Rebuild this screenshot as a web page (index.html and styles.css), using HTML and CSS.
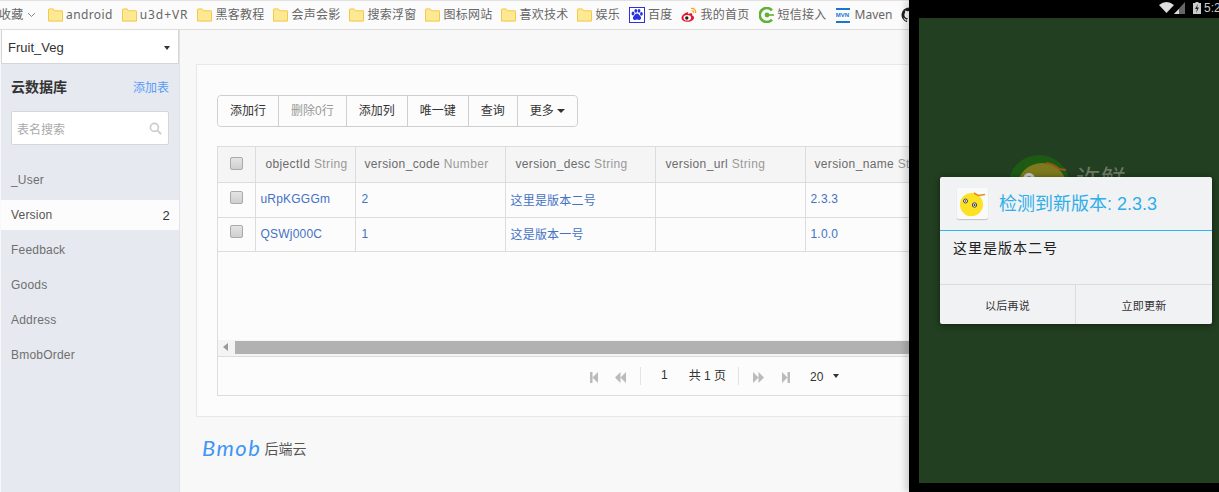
FILE: index.html
```html
<!DOCTYPE html>
<html lang="zh-CN">
<head>
  <meta charset="UTF-8">
  <title>Bmob 云数据库</title>
  <link rel="stylesheet" href="styles.css">
</head>
<body>
  <svg class="defs" width="0" height="0">
    <symbol id="folder" viewBox="0 0 16 14">
      <path d="M.5 13.500V1.500q0-1 1-1h4l1.500 2h8q.5 0 .5 .5v10.500z" fill="#fde992" stroke="#f3c440"/>
    </symbol>
  </svg>

  <nav class="bookmarks">
    <span class="bm bm-first">收藏 <svg class="chev" width="9" height="6" viewBox="0 0 9 6"><path d="M1 1l3.500 3.500L8 1" fill="none" stroke="#888"/></svg></span>
    <span class="bm bm-en"><svg class="bm-icon"><use href="#folder"/></svg>android</span>
    <span class="bm bm-wide"><svg class="bm-icon"><use href="#folder"/></svg>u3d+VR</span>
    <span class="bm"><svg class="bm-icon"><use href="#folder"/></svg>黑客教程</span>
    <span class="bm"><svg class="bm-icon"><use href="#folder"/></svg>会声会影</span>
    <span class="bm"><svg class="bm-icon"><use href="#folder"/></svg>搜索浮窗</span>
    <span class="bm"><svg class="bm-icon"><use href="#folder"/></svg>图标网站</span>
    <span class="bm"><svg class="bm-icon"><use href="#folder"/></svg>喜欢技术</span>
    <span class="bm"><svg class="bm-icon"><use href="#folder"/></svg>娱乐</span>
    <span class="bm"><svg class="site-icon" viewBox="0 0 16 16"><rect x=".5" y=".5" width="15" height="15" fill="#fff" stroke="#2932e1"/><g fill="#2932e1"><ellipse cx="4" cy="6.500" rx="1.400" ry="1.900"/><ellipse cx="6.800" cy="3.800" rx="1.400" ry="1.900"/><ellipse cx="10" cy="3.800" rx="1.400" ry="1.900"/><ellipse cx="12.400" cy="6.800" rx="1.400" ry="1.900"/><path d="M8 6.500c2 0 2.300 2 3.500 3 1.200 1.200 .5 3.500-1.500 3.500-1 0-1.300-.4-2-.4s-1 .4-2 .4c-2 0-2.700-2.300-1.500-3.500 1.200-1 1.500-3 3.500-3z"/></g></svg>百度</span>
    <span class="bm"><svg class="site-icon" viewBox="0 0 16 16"><path d="M6.800 5.300C3.500 6 .5 8.600.5 11c0 2.300 3 3.700 6 3.700 3.800 0 6.500-2 6.500-4 0-1.200-1-1.800-1.900-2.100.5-1.300.1-2.200-.8-2.400-1-.2-2.200.3-3.100 1 .2-1-.1-2.200-.4-1.900z" fill="#e6162d"/><ellipse cx="6.300" cy="10.800" rx="3.800" ry="2.800" fill="#fff"/><circle cx="5.800" cy="11" r="1.700" fill="#222"/><path d="M10 1.500c3-.6 5.200 1.800 4.600 4.700M10.500 3.800c1.400-.3 2.500.8 2.200 2.200" fill="none" stroke="#f5a623" stroke-width="1.200"/></svg>我的首页</span>
    <span class="bm"><svg class="site-icon" viewBox="0 0 16 16"><path d="M13 12.600A7 7 0 1 1 13 3.400" fill="none" stroke="#5fb236" stroke-width="2.600"/><circle cx="8" cy="8" r="2.400" fill="#5fb236"/><path d="M8 8h7" stroke="#5fb236" stroke-width="1.600"/></svg>短信接入</span>
    <span class="bm bm-maven"><span class="mvn">MVN</span>Maven</span>
    <span class="bm"><svg class="site-icon" viewBox="0 0 16 16"><path d="M8 .5a7.500 7.500 0 0 0-2.400 14.600c.4.100.5-.2.500-.4v-1.300c-2.100.4-2.600-1-2.600-1-.3-.9-.8-1.100-.8-1.100-.7-.5.100-.5.100-.5.800.100 1.200.8 1.200.8.700 1.200 1.800.8 2.300.6.100-.5.300-.8.500-1-1.700-.2-3.400-.8-3.400-3.700 0-.8.300-1.500.8-2-.1-.2-.3-1 .1-2 0 0 .6-.2 2.100.8a7 7 0 0 1 3.800 0c1.400-1 2.100-.8 2.100-.8.400 1 .2 1.800.1 2 .5.500.8 1.200.8 2 0 2.900-1.800 3.500-3.400 3.700.3.200.5.700.5 1.400v2c0 .2.100.5.500.4A7.500 7.500 0 0 0 8 .5z" fill="#1b1f23"/></svg></span>
  </nav>

  <div class="app">
    <aside class="sidebar">
      <div class="app-select">Fruit_Veg<span class="caret"></span></div>
      <div class="side-head">
        <strong>云数据库</strong>
        <a class="add-table">添加表</a>
      </div>
      <div class="search">
        <span>表名搜索</span>
        <svg width="13" height="13" viewBox="0 0 14 14"><circle cx="5.800" cy="5.800" r="4.300" fill="none" stroke="#ccc" stroke-width="1.800"/><path d="M9 9l4 4" stroke="#ccc" stroke-width="2"/></svg>
      </div>
      <ul class="tables">
        <li>_User</li>
        <li class="active">Version<span class="count">2</span></li>
        <li>Feedback</li>
        <li>Goods</li>
        <li>Address</li>
        <li>BmobOrder</li>
      </ul>
    </aside>

    <main class="content">
      <section class="panel">
        <div class="toolbar">
          <button>添加行</button>
          <button class="disabled">删除0行</button>
          <button>添加列</button>
          <button>唯一键</button>
          <button>查询</button>
          <button>更多<span class="caret"></span></button>
        </div>

        <div class="grid-box">
          <table class="grid">
            <colgroup>
              <col class="c-check"><col class="c-id"><col class="c-wide"><col class="c-wide"><col class="c-wide"><col class="c-wide">
            </colgroup>
            <thead>
              <tr>
                <th><span class="check"></span></th>
                <th class="th-id">objectId <em>String</em></th>
                <th>version_code <em>Number</em></th>
                <th>version_desc <em>String</em></th>
                <th>version_url <em>String</em></th>
                <th>version_name <em>String</em></th>
              </tr>
            </thead>
            <tbody>
              <tr>
                <td><span class="check"></span></td>
                <td>uRpKGGGm</td><td>2</td><td>这里是版本二号</td><td></td><td>2.3.3</td>
              </tr>
              <tr>
                <td><span class="check"></span></td>
                <td>QSWj000C</td><td>1</td><td>这是版本一号</td><td></td><td>1.0.0</td>
              </tr>
            </tbody>
          </table>
          <div class="grid-space"></div>
          <div class="hscroll">
            <svg width="5" height="8" viewBox="0 0 5 8"><path d="M5 0v8L0 4z" fill="#999"/></svg>
            <div class="thumb"></div>
          </div>
          <div class="pager">
            <svg class="pg pg-first" width="8" height="11" viewBox="0 0 8 11"><path d="M0 0h2.500v11H0zM8 0v11L2.500 5.500z" fill="#bbb"/></svg>
            <svg class="pg pg-prev" width="11" height="11" viewBox="0 0 11 11"><path d="M5.500 0v11L0 5.500zM11 0v11L5.500 5.500z" fill="#bbb"/></svg>
            <span class="pg-sep"></span>
            <span class="pg-num">1</span>
            <span class="pg-total">共 1 页</span>
            <span class="pg-sep pg-sep2"></span>
            <svg class="pg pg-next" width="11" height="11" viewBox="0 0 11 11"><path d="M0 0v11l5.500-5.500zM5.500 0v11L11 5.500z" fill="#bbb"/></svg>
            <svg class="pg pg-last" width="8" height="11" viewBox="0 0 8 11"><path d="M5.500 0H8v11H5.500zM0 0v11l5.500-5.500z" fill="#bbb"/></svg>
            <span class="pg-size">20<span class="caret"></span></span>
          </div>
        </div>
      </section>
      <footer class="brand"><span class="brand-logo">Bmob</span> 后端云</footer>
    </main>
  </div>

  <div class="phone">
    <div class="statusbar">
      <svg width="15" height="11" viewBox="0 0 15 11"><path d="M7.500 11L0 3q7.500-6 15 0z" fill="#ddd"/></svg>
      <svg width="11" height="12" viewBox="0 0 11 12"><path d="M11 0v12H0z" fill="#666"/><path d="M5 7v5H0z" fill="#ddd"/></svg>
      <svg class="battery" width="8" height="12" viewBox="0 0 8 12"><path d="M2.500 0h3v1H8v11H0V1h2.500z" fill="#ccc"/><path d="M5 2L2 7h2l-1 4 3-5.500H4z" fill="#222"/></svg>
      <span class="clock">5:2</span>
    </div>
    <div class="screen">
      <div class="splash">
        <svg width="62" height="40" viewBox="0 0 62 40"><circle cx="31" cy="31" r="31" fill="#1d5a14"/><ellipse cx="34" cy="30" rx="24" ry="22" fill="#7c7a1c"/><path d="M38 8q8 1 13 6l7 1" fill="none" stroke="#96561a" stroke-width="2"/><circle cx="21" cy="24" r="6" fill="#ccc"/><circle cx="21" cy="25" r="3.500" fill="#333"/></svg>
        <span>许鲜</span>
      </div>
      <div class="dialog">
        <div class="dialog-head">
          <span class="dialog-icon">
            <svg width="28" height="26" viewBox="0 0 28 26"><path d="M12.500 2a11.500 11.500 0 0 1 0 23c-1.500 0-3 .5-4.500-.5C3.500 22.500 1 18 1 13.500A11.500 11.500 0 0 1 12.500 2z" fill="#fde124"/><path d="M15 2l4 2.500 7-1" fill="none" stroke="#e58e1a" stroke-width="1.500"/><circle cx="6.500" cy="10" r="2" fill="#fff" stroke="#444"/><circle cx="6.500" cy="10" r=".8" fill="#333"/><circle cx="15.500" cy="14" r="2.200" fill="#fff" stroke="#444"/><circle cx="15.500" cy="14" r="1" fill="#333"/></svg>
          </span>
          <span class="dialog-title">检测到新版本: 2.3.3</span>
        </div>
        <div class="dialog-body">这里是版本二号</div>
        <div class="dialog-actions">
          <span>以后再说</span>
          <span>立即更新</span>
        </div>
      </div>
    </div>
  </div>
</body>
</html>
```

FILE: styles.css
```css
* {
  box-sizing: border-box;
}
html, body {
  margin: 0;
  width: 1219px;
  height: 492px;
  overflow: hidden;
}
body {
  position: relative;
  font-family: "Liberation Sans", "Noto Sans CJK SC", sans-serif;
  font-size: 12px;
  color: #666;
  background: #f8f8f8;
}
.defs {
  position: absolute;
}

/* browser bookmarks */
.bookmarks {
  height: 30px;
  display: flex;
  align-items: center;
  white-space: nowrap;
  background: #fbfbfb;
  border-top: 1px solid #e2e2e2;
  border-bottom: 1px solid #dcdcdc;
  font-family: "Noto Sans", "Noto Sans CJK SC", sans-serif;
  font-size: 12px;
  letter-spacing: .25px;
  color: #666;
}
.bm {
  display: flex;
  align-items: center;
  line-height: 18px;
  margin-right: 9px;
}
.bm-first {
  width: 48px;
  margin-left: -1px;
  margin-right: 1px;
  gap: 3px;
}
.bm-en {
  letter-spacing: .4px;
}
.bm-wide {
  letter-spacing: .9px;
}
.bm-maven {
  letter-spacing: 0;
}
.bm-icon {
  width: 15px;
  height: 14px;
  margin-right: 3px;
}
.site-icon {
  width: 16px;
  height: 16px;
  margin-right: 3px;
  flex: none;
}
.mvn {
  width: 14px;
  height: 15px;
  margin-right: 5px;
  border-top: 2px solid #1976d2;
  border-bottom: 2px solid #1976d2;
  font: bold 6px/11px "Liberation Sans", sans-serif;
  color: #1976d2;
  text-align: center;
  overflow: hidden;
}

.app {
  display: flex;
  height: 462px;
}

/* left column */
.sidebar {
  width: 179px;
  flex: none;
  margin-left: 1px;
  background: #e6e9f0;
  border-right: 1px solid #e1e3e8;
}
.app-select {
  height: 34px;
  padding: 2px 8px 0 6px;
  display: flex;
  align-items: center;
  justify-content: space-between;
  background: #fff;
  border: 1px solid #d6d6d6;
  border-top: 0;
  font-size: 13px;
  color: #333;
}
.caret {
  display: inline-block;
  width: 0;
  height: 0;
  border-top: 4px solid #333;
  border-left: 4px solid transparent;
  border-right: 4px solid transparent;
}
.app-select .caret {
  border-left-width: 3.500px;
  border-right-width: 3.500px;
}
.side-head {
  display: flex;
  align-items: center;
  justify-content: space-between;
  padding: 0 10px 3px;
  height: 47px;
}
.side-head strong {
  font-size: 14px;
  color: #333;
}
.add-table {
  color: #5a9cf8;
  font-size: 12px;
}
.search {
  height: 34px;
  margin: 0 10px;
  padding: 0 6px 0 5px;
  display: flex;
  align-items: center;
  justify-content: space-between;
  background: #fff;
  border: 1px solid #d6d6d6;
  border-radius: 2px;
  color: #aaa;
}
.tables {
  list-style: none;
  margin: 20px 0 0;
  padding: 0;
}
.tables li {
  height: 30px;
  margin-bottom: 5px;
  padding: 0 9px 0 10px;
  display: flex;
  align-items: center;
  justify-content: space-between;
  letter-spacing: .2px;
  color: #6f6f6f;
}
.tables .active {
  background: #fcfcfc;
  color: #555;
}
.count {
  color: #333;
  font-size: 13px;
}

/* main column */
.content {
  flex: 1;
  min-width: 0;
  padding: 34px 0 0 16px;
  overflow: hidden;
}
.panel {
  width: 900px;
  height: 353px;
  padding: 30px 0 0 20px;
  background: #fcfcfc;
  border: 1px solid #e7e8ec;
}
.toolbar {
  display: inline-flex;
  height: 32px;
  margin-bottom: 19px;
  vertical-align: top;
  background: #fff;
  border: 1px solid #cfcfcf;
  border-radius: 4px;
}
.toolbar button {
  height: 100%;
  padding: 0 12px 3px;
  display: flex;
  align-items: center;
  gap: 3px;
  border: 0;
  border-right: 1px solid #cfcfcf;
  background: #fcfcfc;
  font: 12px "Liberation Sans", "Noto Sans CJK SC", sans-serif;
  color: #333;
}
.toolbar button:first-child {
  border-radius: 4px 0 0 4px;
}
.toolbar button:last-child {
  border-right: 0;
  border-radius: 0 4px 4px 0;
}
.toolbar button .caret {
  margin-top: 3px;
}
.toolbar .disabled {
  color: #999;
}
.grid-box {
  width: 880px;
  height: 250px;
  display: flex;
  flex-direction: column;
  border: 1px solid #dcdcdc;
}
.grid {
  width: 737px;
  table-layout: fixed;
  border-collapse: collapse;
  flex: none;
}
.c-check { width: 37px; }
.c-id { width: 100px; }
.c-wide { width: 150px; }
.grid th, .grid td {
  border-right: 1px solid #dcdcdc;
  border-bottom: 1px solid #dcdcdc;
  padding: 0 5px 1px;
  white-space: nowrap;
  overflow: hidden;
  text-align: left;
  font-weight: normal;
}
.grid th {
  height: 35px;
  padding-left: 9px;
  background: #f5f5f5;
  color: #6b6b6b;
  letter-spacing: .35px;
}
.grid .th-id,
.grid th:nth-child(4),
.grid th:nth-child(5) {
  padding-left: 10px;
}
.grid th em {
  font-style: normal;
  color: #999;
}
.grid td {
  height: 35px;
  letter-spacing: .2px;
  color: #4472c4;
}
.grid tr:last-child td {
  height: 34px;
}
.grid td:nth-child(3) {
  padding-left: 6px;
}
.grid th:first-child, .grid td:first-child {
  padding: 0 0 0 12px;
}
.check {
  display: block;
  width: 13px;
  height: 13px;
  background: linear-gradient(#e4e4e4, #cfcfcf);
  border: 1px solid #aaa;
  border-radius: 2px;
}
thead .check {
  margin-top: -2px;
}
tbody .check {
  margin-top: -5px;
}
.grid-space {
  height: 88px;
  flex: none;
}
.hscroll {
  height: 17px;
  flex: none;
  padding: 1px 0 2px 5px;
  display: flex;
  align-items: center;
  gap: 7px;
  background: #f4f4f4;
  border-bottom: 1px solid #dcdcdc;
}
.thumb {
  flex: 1;
  height: 13px;
  background: #b1b1b1;
}
.pager {
  flex: 1;
  display: flex;
  align-items: center;
  padding-left: 372px;
  color: #333;
}
.pg {
  margin-top: 4px;
  flex: none;
}
.pg-prev { margin-left: 17px; }
.pg-sep {
  width: 1px;
  height: 18px;
  margin-left: 14px;
  background: #e4e4e4;
}
.pg-num { margin-left: 20px; margin-top: -2px; }
.pg-total { margin-left: 21px; margin-top: -2px; }
.pg-sep2 { margin-left: 12px; }
.pg-next { margin-left: 14px; }
.pg-last { margin-left: 18px; }
.pg-size {
  margin-left: 20px;
  margin-top: 3px;
  display: flex;
  align-items: center;
  gap: 10px;
}
.pg-size .caret {
  border-left-width: 3px;
  border-right-width: 3px;
  margin-top: -2px;
}
.brand {
  margin: 17px 0 0 6px;
  display: flex;
  align-items: center;
  gap: 3px;
  font-size: 14px;
  color: #555;
}
.brand-logo {
  font: italic 22px/28px Lato, sans-serif;
  letter-spacing: 1.500px;
  color: #3d96f5;
}

/* phone mirror on top of the browser */
.phone {
  position: absolute;
  top: 0;
  right: 0;
  width: 310px;
  height: 492px;
  padding: 0 0 9px 10px;
  display: flex;
  flex-direction: column;
  background: #000;
  box-shadow: -4px 0 6px rgba(0, 0, 0, .15);
}
.statusbar {
  height: 18px;
  flex: none;
  display: flex;
  align-items: center;
  padding-left: 240px;
  color: #ccc;
  font-size: 12px;
}
.statusbar svg {
  flex: none;
  margin-top: -3px;
}
.battery {
  margin-left: 8px;
}
.clock {
  margin-left: 3px;
  margin-top: -3px;
  flex: none;
}
.screen {
  flex: 1;
  position: relative;
  background: #223f21;
  overflow: hidden;
}
.splash {
  position: absolute;
  top: 137px;
  left: 89px;
  display: flex;
  gap: 6px;
  font-size: 25px;
  color: #6e7a68;
  line-height: 30px;
}
.splash span {
  margin-top: 9px;
}
.dialog {
  position: absolute;
  left: 21px;
  top: 159px;
  width: 272px;
  height: 147px;
  display: flex;
  flex-direction: column;
  background: #f1f2f3;
  border-radius: 2px;
  box-shadow: 0 1px 6px rgba(0, 0, 0, .5);
}
.dialog-head {
  height: 54px;
  flex: none;
  display: flex;
  align-items: center;
  gap: 11px;
  padding-left: 17px;
  border-bottom: 1px solid #29b6f6;
}
.dialog-icon {
  width: 31px;
  height: 31px;
  display: flex;
  align-items: center;
  justify-content: center;
  background: #fafafa;
  border-radius: 2px;
  box-shadow: 0 1px 1px rgba(0, 0, 0, .2);
}
.dialog-title {
  font-size: 18px;
  line-height: 24px;
  color: #2eaeea;
}
.dialog-body {
  flex: 1;
  padding: 7px 13px;
  font-size: 14px;
  line-height: 20px;
  letter-spacing: 1px;
  color: #222;
}
.dialog-actions {
  height: 40px;
  flex: none;
  display: flex;
  border-top: 1px solid #dcdcdc;
  font-size: 11px;
  letter-spacing: .3px;
  color: #333;
}
.dialog-actions span {
  flex: 1;
  display: flex;
  align-items: center;
  justify-content: center;
}
.dialog-actions span:first-child {
  flex: none;
  width: 136px;
  border-right: 1px solid #dcdcdc;
}
```
